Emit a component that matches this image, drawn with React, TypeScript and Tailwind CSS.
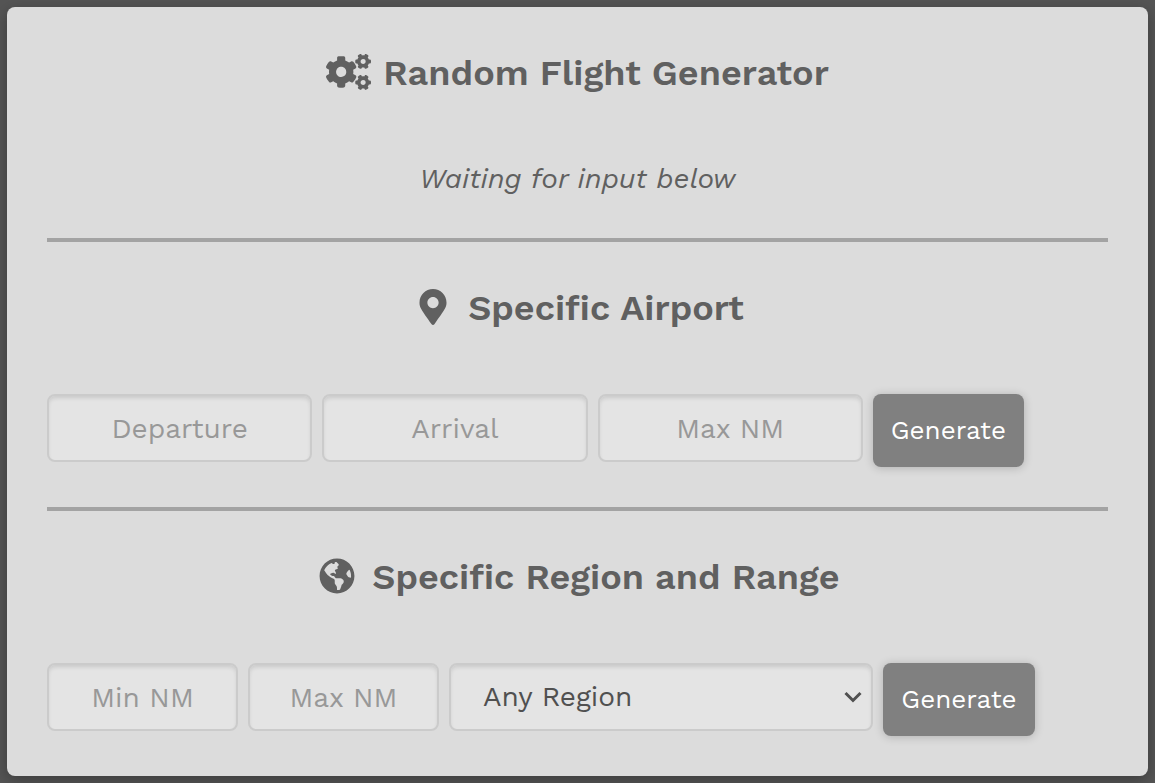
import { useState } from 'react';
import type { FormEvent, InputHTMLAttributes, ReactNode } from 'react';
import { FaCogs, FaGlobeAmericas, FaMapMarkerAlt } from 'react-icons/fa';

const fieldStyle =
  'h-[68px] min-w-0 rounded-lg border-2 border-[#cbcbcb] bg-[#e4e4e4] text-[28px] shadow-[inset_0_3px_4px_-1px_rgba(0,0,0,0.12)] outline-none focus:border-[#a3a3a3]';

const regions = ['Any Region', 'Africa', 'Asia', 'Europe', 'North America', 'Oceania', 'South America'];

function Field({ label, className, ...props }: { label: string } & InputHTMLAttributes<HTMLInputElement>) {
  return (
    <input
      type="text"
      aria-label={label}
      placeholder={label}
      className={`${fieldStyle} px-4 text-center placeholder:text-[#989898] ${className}`}
      {...props}
    />
  );
}

function GenerateButton() {
  return (
    <button
      type="submit"
      className="h-[73px] shrink-0 rounded-lg bg-[#808080] px-[18px] text-[26px] text-white shadow-[0_1px_10px_rgba(0,0,0,0.2)] hover:bg-[#707070]"
    >
      Generate
    </button>
  );
}

function SectionTitle({ icon, children }: { icon: ReactNode; children: ReactNode }) {
  return (
    <h2 className="flex items-center justify-center gap-[17px] pl-1 text-[36px] leading-[52px] font-semibold">
      {icon}
      {children}
    </h2>
  );
}

export default function App() {
  const [status, setStatus] = useState('Waiting for input below');
  const [region, setRegion] = useState(regions[0]);

  const handleSubmit = (e: FormEvent) => {
    e.preventDefault();
    setStatus('Generating flight...');
  };

  return (
    <div className="min-h-screen bg-[#555555] p-[7px] font-['Work_Sans',Inter,sans-serif] text-[#606060]">
      <main className="rounded-lg bg-[#dcdcdc] p-10 shadow-[0_4px_16px_rgba(0,0,0,0.3)]">
        <h1 className="flex items-center justify-center gap-3 text-[36px] leading-[52px] font-semibold">
          <FaCogs className="mb-0.5 h-9 w-[45px]" />
          Random Flight Generator
        </h1>
        <p className="mt-[60px] text-center text-[28px] leading-[39px] italic">{status}</p>

        <hr className="my-10 border-t-4 border-[#a3a3a3]" />

        <SectionTitle icon={<FaMapMarkerAlt className="mb-0.5 size-9" />}>Specific Airport</SectionTitle>
        <form onSubmit={handleSubmit} className="mt-[60px] flex items-start gap-[10px]">
          <Field label="Departure" className="w-1/4" />
          <Field label="Arrival" className="w-1/4" />
          <Field label="Max NM" className="w-1/4" />
          <GenerateButton />
        </form>

        <hr className="my-10 border-t-4 border-[#a3a3a3]" />

        <SectionTitle icon={<FaGlobeAmericas className="mb-0.5 size-9" />}>Specific Region and Range</SectionTitle>
        <form onSubmit={handleSubmit} className="mt-[60px] flex items-start gap-[10px]">
          <Field label="Min NM" className="w-[18%]" />
          <Field label="Max NM" className="w-[18%]" />
          <div className="grid w-2/5 items-center">
            <select
              aria-label="Region"
              value={region}
              onChange={(e) => setRegion(e.target.value)}
              className={`${fieldStyle} col-start-1 row-start-1 w-full appearance-none px-8 text-[#505050]`}
            >
              {regions.map((name) => (
                <option key={name}>{name}</option>
              ))}
            </select>
            <svg
              viewBox="0 0 18 12"
              className="pointer-events-none col-start-1 row-start-1 mr-[11px] h-3 w-[18px] justify-self-end"
              fill="none"
              stroke="#505050"
              strokeWidth="3"
            >
              <path d="M1.5 2 9 9.5 16.5 2" />
            </svg>
          </div>
          <GenerateButton />
        </form>
      </main>
    </div>
  );
}
